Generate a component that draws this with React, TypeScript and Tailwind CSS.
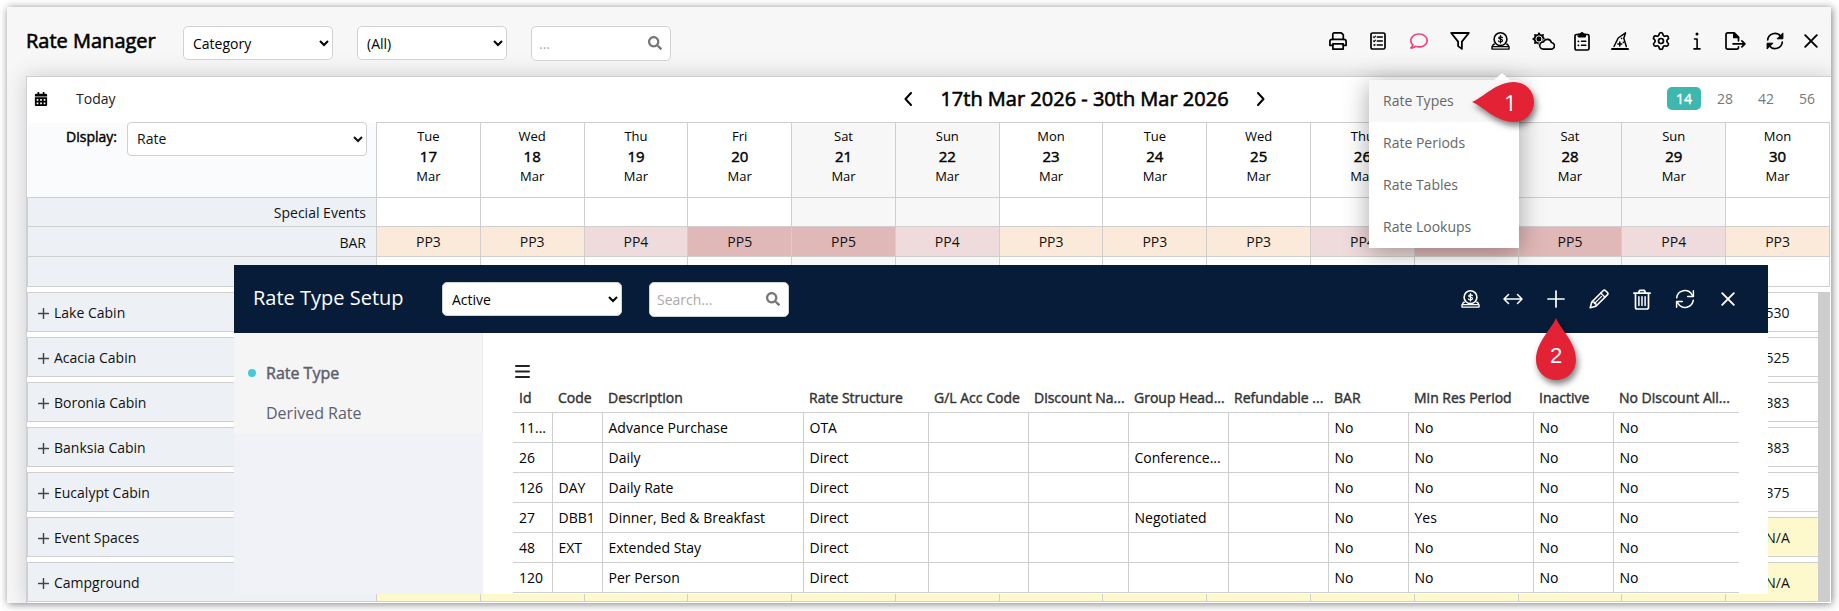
import type { ReactNode } from "react";
import { Settings } from "lucide-react";
import { FaCalendarAlt, FaRegComment, FaSearch } from "react-icons/fa";

const days = [
  { day: "Tue", date: 17, period: "PP3" },
  { day: "Wed", date: 18, period: "PP3" },
  { day: "Thu", date: 19, period: "PP4" },
  { day: "Fri", date: 20, period: "PP5" },
  { day: "Sat", date: 21, period: "PP5" },
  { day: "Sun", date: 22, period: "PP4" },
  { day: "Mon", date: 23, period: "PP3" },
  { day: "Tue", date: 24, period: "PP3" },
  { day: "Wed", date: 25, period: "PP3" },
  { day: "Thu", date: 26, period: "PP4" },
  { day: "Fri", date: 27, period: "PP5" },
  { day: "Sat", date: 28, period: "PP5" },
  { day: "Sun", date: 29, period: "PP4" },
  { day: "Mon", date: 30, period: "PP3" },
];

const periodColors: Record<string, string> = {
  PP3: "bg-[#fbe9d9]",
  PP4: "bg-[#efdbdb]",
  PP5: "bg-[#e1b8b8]",
};

const categories = [
  { name: "Lake Cabin", rate: "530" },
  { name: "Acacia Cabin", rate: "525" },
  { name: "Boronia Cabin", rate: "383" },
  { name: "Banksia Cabin", rate: "383" },
  { name: "Eucalypt Cabin", rate: "375" },
  { name: "Event Spaces", rate: "N/A" },
  { name: "Campground", rate: "N/A" },
];

const columns = [
  { label: "Id", width: "w-[39px]" },
  { label: "Code", width: "w-[50px]" },
  { label: "Description", width: "" },
  { label: "Rate Structure", width: "w-[125px]" },
  { label: "G/L Acc Code", width: "w-[100px]" },
  { label: "Discount Na...", width: "w-[100px]" },
  { label: "Group Head...", width: "w-[100px]" },
  { label: "Refundable ...", width: "w-[100px]" },
  { label: "BAR", width: "w-[80px]" },
  { label: "Min Res Period", width: "w-[125px]" },
  { label: "Inactive", width: "w-[80px]" },
  { label: "No Discount All...", width: "w-[126px]" },
];

const rateTypes = [
  ["11...", "", "Advance Purchase", "OTA", "", "", "", "", "No", "No", "No", "No"],
  ["26", "", "Daily", "Direct", "", "", "Conference...", "", "No", "No", "No", "No"],
  ["126", "DAY", "Daily Rate", "Direct", "", "", "", "", "No", "No", "No", "No"],
  ["27", "DBB1", "Dinner, Bed & Breakfast", "Direct", "", "", "Negotiated", "", "No", "Yes", "No", "No"],
  ["48", "EXT", "Extended Stay", "Direct", "", "", "", "", "No", "No", "No", "No"],
  ["120", "", "Per Person", "Direct", "", "", "", "", "No", "No", "No", "No"],
];

const menuItems = ["Rate Types", "Rate Periods", "Rate Tables", "Rate Lookups"];

// Thickened regular weight, keeps the regular widths
const strong = "font-normal [-webkit-text-stroke:0.03em]";

const isWeekend = (day: string) => day === "Sat" || day === "Sun";

function Svg({ children, className = "size-[18px]", box = "0 0 18 18", stroke = 1.7 }: {
  children: ReactNode;
  className?: string;
  box?: string;
  stroke?: number;
}) {
  return (
    <svg
      viewBox={box}
      className={`shrink-0 ${className}`}
      fill="none"
      stroke="currentColor"
      strokeWidth={stroke}
      strokeLinecap="round"
      strokeLinejoin="round"
      aria-hidden="true"
    >
      {children}
    </svg>
  );
}

function PrintIcon() {
  return (
    <Svg>
      <path d="M3.8 7.3V2.2C3.8 1.4 4.3.9 5.1.9h7.2l2 2v4.4" />
      <path d="M3.8 13.3H.9V9.6c0-1.3.9-2.2 2.2-2.2h11.8c1.3 0 2.2.9 2.2 2.2v3.7h-2.9" />
      <path d="M3.9 11.8h10.3v5.3H3.9z" />
    </Svg>
  );
}

function ListIcon() {
  return (
    <Svg className="w-4 h-[18px]" box="0 0 16 18">
      <rect x="1" y="1" width="14" height="16" rx="1.6" />
      <path d="M7.3 5h5M7.3 9h5M7.3 13h5" strokeWidth="1.5" />
      <path d="M3.4 4.9l.8.8 1.3-1.5M3.4 8.9l.8.8 1.3-1.5" strokeWidth="1.1" />
      <circle cx="4.3" cy="13" r=".6" strokeWidth="1" />
    </Svg>
  );
}

function FilterIcon() {
  return (
    <Svg className="w-5 h-[18px]" box="0 0 20 18" stroke={1.8}>
      <path d="M1.2 1h17.6l-6.9 8.6v7.3l-3.8-2.8V9.6z" />
    </Svg>
  );
}

function CoinIcon() {
  return (
    <Svg className="w-[19px] h-[18px]" box="0 0 19 18" stroke={1.6}>
      <circle cx="9.5" cy="7.2" r="6.4" />
      <path d="M3.3 12.2H2.6L1 14.9v2.2h17v-2.2l-1.6-2.7h-.7" strokeWidth="1.4" />
      <path d="M1.4 14.6h16.2" strokeWidth="1.2" />
      <path d="M11.4 5.6c-.4-.6-1-.8-1.9-.8-1.1 0-1.8.5-1.8 1.2 0 1.7 3.8.7 3.8 2.6 0 .8-.8 1.3-2 1.3-.9 0-1.7-.3-2.1-.9M9.5 3.6V11" strokeWidth="1.2" />
    </Svg>
  );
}

function WeatherIcon() {
  return (
    <Svg className="w-[23px] h-[18px]" box="0 0 23 18" stroke={1.6}>
      <path
        d="M7 0L8.9 2.4 11.9 2.1 11.6 5.1 14 7 11.6 8.9 11.9 11.9 8.9 11.6 7 14 5.1 11.6 2.1 11.9 2.4 8.9 0 7 2.4 5.1 2.1 2.1 5.1 2.4z"
        fill="currentColor"
        stroke="none"
      />
      <circle cx="7" cy="7" r="3.1" stroke="#f7f7f7" strokeWidth="1" />
      <path
        d="M11.2 17.1h7.6a3.3 3.3 0 0 0 .6-6.6 4.2 4.2 0 0 0-7.9-.6 3.6 3.6 0 0 0-.3 7.2z"
        fill="#f7f7f7"
        stroke="#f7f7f7"
        strokeWidth="3"
      />
      <path d="M11.2 17.1h7.6a3.3 3.3 0 0 0 .6-6.6 4.2 4.2 0 0 0-7.9-.6 3.6 3.6 0 0 0-.3 7.2z" />
    </Svg>
  );
}

function ClipboardIcon() {
  return (
    <Svg className="w-4 h-5" box="0 0 16 20">
      <rect x="1" y="3.5" width="14" height="15.5" rx="1.6" />
      <path d="M4.5 3h1.6a2 2 0 0 1 3.8 0h1.6v3h-7z" fill="currentColor" strokeWidth="1" />
      <path d="M7.5 10.3h4.3M7.5 14.3h4.3" strokeWidth="1.4" />
      <path d="M4.3 10.3h.2M4.3 14.3h.2" strokeWidth="1.7" />
    </Svg>
  );
}

function HatIcon() {
  return (
    <Svg stroke={1.5}>
      <path d="M1 17h16" strokeWidth="2" />
      <path d="M3 14.5L7.2 6 14.5.9l-1.7 5.4 2.5 8.2" />
      <path d="M8.8 10.1v3.8M6.9 12h3.8" strokeWidth="1.5" />
      <path d="M10.5 6.5h.2M12.3 10.3v.1" strokeWidth="1.5" />
    </Svg>
  );
}

function InfoIcon() {
  return (
    <Svg className="w-2 h-[18px]" box="0 0 8 18" stroke={1.6}>
      <circle cx="4" cy="2" r="1.5" fill="currentColor" stroke="none" />
      <path d="M1.5 7h2.6v9.5M1 16.9h6" />
    </Svg>
  );
}

function ExportIcon() {
  return (
    <Svg className="w-[21px] h-[18px]" box="0 0 21 18">
      <path d="M13.5 14.8v.5c0 1-.7 1.8-1.8 1.8h-9C1.7 17.1 1 16.3 1 15.3V2.7C1 1.7 1.7.9 2.7.9h6.6l4.2 4.2v3.7" />
      <path d="M8.9 1v4.5h4.5" fill="currentColor" />
      <path d="M8 11.8h11.8M16.9 8.8l3 3-3 3" />
    </Svg>
  );
}

function SolidRefreshIcon() {
  return (
    <Svg>
      <path d="M1.7 8A7.3 7.3 0 0 1 14.7 4.2M16.3 10A7.3 7.3 0 0 1 3.3 13.8" />
      <path d="M16.9 1.3v5.5h-5.5zM1.1 16.7v-5.5h5.5z" fill="currentColor" strokeWidth="1" />
    </Svg>
  );
}

function RefreshIcon() {
  return (
    <Svg className="size-5" box="0 0 20 20" stroke={1.5}>
      <path d="M1.7 8.8A8.2 8.2 0 0 1 16.9 5.7L18.3 7.3M18.3 11.2A8.2 8.2 0 0 1 3.1 14.3L1.7 12.7" />
      <path d="M18.4 1.8v5.7h-5.7M1.6 18.2v-5.7h5.7" />
    </Svg>
  );
}

function CloseIcon() {
  return (
    <Svg className="size-[14px]" box="0 0 14 14" stroke={1.9}>
      <path d="M1.2 1.2l11.6 11.6M12.8 1.2L1.2 12.8" />
    </Svg>
  );
}

function PlusIcon({ className, stroke = 1.7 }: { className: string; stroke?: number }) {
  return (
    <Svg className={className} stroke={stroke}>
      <path d="M9 1v16M1 9h16" />
    </Svg>
  );
}

function PencilIcon() {
  return (
    <Svg className="size-5" box="0 0 20 20" stroke={1.6}>
      <path d="M1.2 18.8l1.5-5.7L14.1 1.7c.8-.8 1.7-.8 2.5 0l1.7 1.7c.8.8.8 1.7 0 2.5L6.9 17.3z" />
      <path d="M11.8 4l4.2 4.2M12.6 7.4l-7 7M2.9 13.1h2.5v1.5h1.5v2.5" strokeWidth="1.3" />
    </Svg>
  );
}

function TrashIcon() {
  return (
    <Svg className="w-[18px] h-[21px]" box="0 0 18 21">
      <path d="M.9 4.2h16.2M5.2 4l1.6-2.7h4.4L12.8 4" />
      <path d="M2.5 4.5v13.7c0 1.1.7 1.8 1.7 1.8h9.6c1 0 1.7-.7 1.7-1.8V4.5" />
      <path d="M5.9 7.7v8.8M9 7.7v8.8M12.1 7.7v8.8" strokeWidth="1.5" />
    </Svg>
  );
}

const tools = [
  { label: "Print", width: "w-[20px]", icon: <PrintIcon /> },
  { label: "Checklist", width: "w-[20px]", icon: <ListIcon /> },
  { label: "Comments", width: "w-[22px]", icon: <FaRegComment className="size-[18px] shrink-0 text-[#f0417c]" /> },
  { label: "Filter", width: "w-[20px]", icon: <FilterIcon /> },
  { label: "Rates", width: "w-[20px]", icon: <CoinIcon /> },
  { label: "Seasons", width: "w-[26px]", icon: <WeatherIcon /> },
  { label: "Clipboard", width: "w-[12px]", icon: <ClipboardIcon /> },
  { label: "Wizard", width: "w-[24px]", icon: <HatIcon /> },
  { label: "Settings", width: "w-[18px]", icon: <Settings className="size-5 shrink-0" /> },
  { label: "Information", width: "w-[14px]", icon: <InfoIcon /> },
  { label: "Export", width: "w-[22px]", icon: <ExportIcon /> },
  { label: "Refresh", width: "w-[18px]", icon: <SolidRefreshIcon /> },
  { label: "Close", width: "w-[14px]", icon: <CloseIcon /> },
];

const dialogTools = [
  { label: "Rates", icon: <CoinIcon /> },
  {
    label: "Resize",
    icon: (
      <Svg className="w-5 h-3" box="0 0 20 12" stroke={1.5}>
        <path d="M1 6h18M5.5 1.5L1 6l4.5 4.5M14.5 1.5L19 6l-4.5 4.5" />
      </Svg>
    ),
  },
  { label: "Add", icon: <PlusIcon className="size-[18px]" /> },
  { label: "Edit", icon: <PencilIcon /> },
  { label: "Delete", icon: <TrashIcon /> },
  { label: "Reload", icon: <RefreshIcon /> },
  { label: "Close dialog", icon: <CloseIcon /> },
];

function SearchBox({ label, placeholder }: { label: string; placeholder: string }) {
  return (
    <div className="relative w-[140px]">
      <input
        type="text"
        aria-label={label}
        placeholder={placeholder}
        className="block w-full h-[35px] rounded-[5px] border border-[#d2d2d2] bg-white pl-[7px] pr-8 text-sm text-black placeholder:text-[#aaa]"
      />
      <FaSearch className="absolute right-[9px] top-[10px] size-[14px] text-[#777]" />
    </div>
  );
}

function Toolbar() {
  return (
    <header className="flex items-start pl-[19px] pr-[13px] h-[69px] pt-[19px]">
      <h1 className={`text-xl leading-[30px] w-[157px] whitespace-nowrap ${strong}`}>Rate Manager</h1>
      <div className="flex gap-6">
        <select aria-label="Group by" className="w-[150px] h-[34px] rounded-[5px] border border-[#d2d2d2] bg-white px-[5px] text-sm">
          <option>Category</option>
        </select>
        <select aria-label="Category" className="w-[150px] h-[34px] rounded-[5px] border border-[#d2d2d2] bg-white px-[5px] text-sm">
          <option>(All)</option>
        </select>
        <SearchBox label="Search rates" placeholder="..." />
      </div>
      <div className="ml-auto flex items-center gap-5 h-[30px]">
        {tools.map((tool) => (
          <button key={tool.label} aria-label={tool.label} className={`flex justify-center ${tool.width}`}>
            {tool.icon}
          </button>
        ))}
      </div>
    </header>
  );
}

function DateBar() {
  return (
    <div className="flex items-center h-[45px] pb-[2px] pr-[7px]">
      <div className="flex items-center gap-7 w-[475px] pl-[7px] text-sm">
        <button aria-label="Pick a date">
          <FaCalendarAlt className="size-[14px]" />
        </button>
        <button className="text-[#222]">Today</button>
      </div>
      <div className="flex flex-1 items-center justify-center gap-7">
        <button aria-label="Previous dates">
          <Svg className="w-2 h-[14px]" box="0 0 8 14" stroke={2}>
            <path d="M7 1L1.5 7 7 13" />
          </Svg>
        </button>
        <h2 className={`text-xl leading-6 whitespace-nowrap ${strong}`}>17th Mar 2026 - 30th Mar 2026</h2>
        <button aria-label="Next dates">
          <Svg className="w-2 h-[14px]" box="0 0 8 14" stroke={2}>
            <path d="M1 1l5.5 6L1 13" />
          </Svg>
        </button>
      </div>
      <div className="flex gap-[7px] text-sm text-[#777]">
        {["14", "28", "42", "56"].map((n) => (
          <button
            key={n}
            className={`w-[34px] h-[23px] rounded-[5px] ${n === "14" ? `bg-[#3eb7af] text-white ${strong}` : ""}`}
          >
            {n}
          </button>
        ))}
      </div>
    </div>
  );
}

function RateGrid() {
  const cell = "border border-[#cfcfcf] text-center font-normal p-0";
  const side = "border border-[#cfcfcf] bg-[#edf1f6] font-normal pt-[2px] pb-0";
  return (
    <div className="relative pr-px">
      <table className="w-full table-fixed border-collapse text-sm text-[#111]">
        <colgroup>
          <col className="w-[349px]" />
          {days.map((d) => (
            <col key={d.date} />
          ))}
        </colgroup>
        <thead>
          <tr className="h-[75px]">
            <td className="border-r border-b border-[#cfcfcf] bg-[#fafbfd] p-0 align-top">
              <div className="flex justify-end gap-[10px] pr-[9px] -mt-px">
                <label htmlFor="display" className={`leading-[30px] text-black ${strong}`}>Display:</label>
                <select id="display" className="w-[240px] h-[34px] rounded-[4px] border border-[#cfcfcf] bg-white px-[5px]">
                  <option>Rate</option>
                </select>
              </div>
            </td>
            {days.map((d) => (
              <th key={d.date} className={`${cell} align-top pt-[3px] leading-5 text-[13px] text-black ${isWeekend(d.day) ? "bg-[#f7f7f7]" : ""}`}>
                {d.day}
                <span className={`block text-[15px] ${strong}`}>{d.date}</span>
                Mar
              </th>
            ))}
          </tr>
        </thead>
        <tbody>
          <tr className="h-[29px]">
            <th className={`${side} pr-[10px] text-right`}>Special Events</th>
            {days.map((d) => (
              <td key={d.date} className={`${cell} ${isWeekend(d.day) ? "bg-[#f7f7f7]" : ""}`} />
            ))}
          </tr>
          <tr className="h-[30px]">
            <th className={`${side} pr-[10px] text-right`}>BAR</th>
            {days.map((d) => (
              <td key={d.date} className={`${cell} ${periodColors[d.period]}`}>{d.period}</td>
            ))}
          </tr>
          <tr className="h-[30px]">
            <th className={side} />
            {days.map((d) => (
              <td key={d.date} className={`${cell} ${isWeekend(d.day) ? "bg-[#f7f7f7]" : ""}`} />
            ))}
          </tr>
        </tbody>
        {categories.map((c) => (
          <tbody key={c.name}>
            <tr className="h-[6px]">
              <td colSpan={15} className="p-0" />
            </tr>
            <tr className="h-[39px]">
              <th className={`${side} pl-[10px] text-left`}>
                <button className="flex items-center gap-[5px]">
                  <PlusIcon className="size-[11px] text-[#444]" stroke={2.4} />
                  {c.name}
                </button>
              </th>
              {days.map((d, i) => (
                <td key={d.date} className={`border border-[#cfcfcf] text-center p-0 pt-[2px] ${c.rate === "N/A" ? "bg-[#fef9cd]" : ""}`}>
                  {i === days.length - 1 && c.rate}
                </td>
              ))}
            </tr>
          </tbody>
        ))}
      </table>
      {/* Scrollbar over the category rows */}
      <div className="absolute right-px top-[170px] bottom-0 w-3 bg-[#cdcdcd]" />
    </div>
  );
}

function RatesMenu() {
  return (
    <div className="absolute right-[312px] top-[66px] w-[150px]">
      <svg viewBox="0 0 16 7" className="ml-[125px] w-4 h-[7px] text-white" aria-hidden="true">
        <path d="M8 0l8 7H0z" fill="currentColor" />
      </svg>
      <ul className="bg-white text-sm text-[#666] shadow-[0_4px_24px_rgba(0,0,0,0.35)]">
        {menuItems.map((item, i) => (
          <li key={item}>
            <a href="#" className={`flex items-center h-[42px] px-[14px] hover:bg-[#f7f7f7] ${i === 0 ? "bg-[#f7f7f7]" : ""}`}>
              {item}
            </a>
          </li>
        ))}
      </ul>
    </div>
  );
}

function RateTypeDialog() {
  return (
    <section role="dialog" aria-label="Rate Type Setup" className="absolute left-[227px] right-[63px] top-[258px] h-[329px] flex flex-col overflow-hidden bg-white">
      <header className="flex items-center h-[68px] shrink-0 bg-[#071c38] pl-[19px] pr-[30px] text-white">
        <h2 className="text-xl w-[189px] pb-[2px] whitespace-nowrap">Rate Type Setup</h2>
        <select aria-label="Status" className="w-[180px] h-[34px] rounded-[5px] border border-[#d2d2d2] bg-white px-[5px] text-sm text-black">
          <option>Active</option>
        </select>
        <div className="ml-[27px]">
          <SearchBox label="Search rate types" placeholder="Search..." />
        </div>
        <div className="ml-auto flex items-center gap-[23px]">
          {dialogTools.map((tool) => (
            <button key={tool.label} aria-label={tool.label} className="flex justify-center w-5">
              {tool.icon}
            </button>
          ))}
        </div>
      </header>
      <div className="flex flex-1">
        <nav className="w-[249px] shrink-0 bg-[#f0f2f8]">
          <ul className="bg-[#f5f5f5] border-r border-[#ebebeb] pt-5 text-[#5d6070]">
            <li>
              <a href="#" className={`flex items-center gap-[10px] h-10 pl-[14px] ${strong}`}>
                <span className="size-2 rounded-full bg-[#45cbd8]" />
                Rate Type
              </a>
            </li>
            <li>
              <a href="#" className="flex items-center h-10 pl-8">Derived Rate</a>
            </li>
          </ul>
        </nav>
        <div className="flex-1 pl-[30px] pr-[29px] pt-8">
          <button aria-label="Table options" className="block ml-[2px] mb-[6px]">
            <Svg className="w-[15px] h-[13px] text-[#222]" box="0 0 15 13" stroke={2}>
              <path d="M1 1h13M1 6.5h13M1 12h13" />
            </Svg>
          </button>
          <table className="w-full table-fixed text-sm text-black">
            <thead>
              <tr className="h-7">
                {columns.map((c) => (
                  <th key={c.label} className={`${c.width} ${strong} border-b border-[#cfcfcf] p-0 pl-[6px] text-left whitespace-nowrap text-[#333]`}>
                    {c.label}
                  </th>
                ))}
              </tr>
            </thead>
            <tbody>
              {rateTypes.map((row) => (
                <tr key={row[0]} className="h-[30px]">
                  {row.map((value, i) => (
                    <td key={i} className="border-b border-r last:border-r-0 border-[#cfcfcf] p-0 pl-[6px] pt-[2px] whitespace-nowrap">
                      {value}
                    </td>
                  ))}
                </tr>
              ))}
            </tbody>
          </table>
        </div>
      </div>
    </section>
  );
}

export default function App() {
  return (
    <div className="bg-white p-[7px] pr-2 pb-2 text-black font-['Open_Sans','Noto_Sans',sans-serif]">
      <div className="relative bg-[#f7f7f7] shadow-[1px_1px_8px_rgba(0,0,0,0.5)]">
        <div className="overflow-hidden">
          <Toolbar />
          <main className="ml-[19px] border-t border-l border-[#cfcfcf] bg-white pb-px shadow-[0_0_20px_rgba(60,60,80,0.22)]">
            <DateBar />
            <RateGrid />
          </main>
        </div>
        <RatesMenu />
        <RateTypeDialog />

        {/* Step markers */}
        <div className="absolute right-[297px] top-[75px] w-[62px] h-10 flex items-center text-white">
          <svg viewBox="0 0 62 40" className="absolute inset-0 overflow-visible drop-shadow-[2px_4px_3px_rgba(0,0,0,0.5)]" aria-hidden="true">
            <path d="M0 20C12 15 24 0 42 0a20 20 0 0 1 0 40C24 40 12 25 0 20z" fill="#e32236" />
          </svg>
          <span className="relative ml-8 text-[22px] leading-none font-medium">1</span>
        </div>
        <div className="absolute right-[255px] top-[311px] w-10 h-[62px] text-center text-white">
          <svg viewBox="0 0 40 62" className="absolute inset-0 overflow-visible drop-shadow-[2px_4px_3px_rgba(0,0,0,0.5)]" aria-hidden="true">
            <path d="M20 0C25 12 40 24 40 42a20 20 0 0 1-40 0C0 24 15 12 20 0z" fill="#e32236" />
          </svg>
          <span className="relative block pt-[26px] text-[22px] leading-6 font-['Liberation_Sans',sans-serif]">2</span>
        </div>
      </div>
    </div>
  );
}
